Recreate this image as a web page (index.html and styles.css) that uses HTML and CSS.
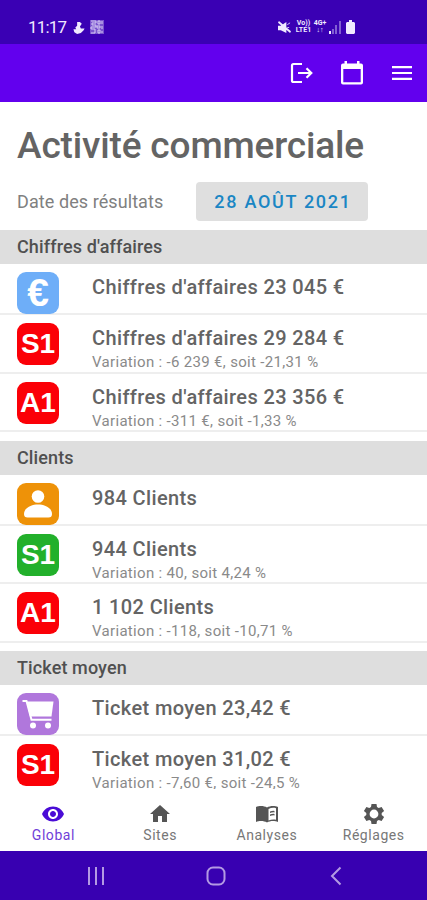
FILE: index.html
```html
<!DOCTYPE html>
<html lang="fr">
<head>
    <meta charset="UTF-8">
    <meta name="viewport" content="width=device-width, initial-scale=1.0">
    <title>Activité commerciale</title>
    <link rel="stylesheet" href="styles.css">
</head>
<body>
    <div class="phone">
        <!-- Barre de statut -->
        <div class="status-bar">
            <span class="time">11:17</span>
            <svg class="status-hand" viewBox="0 0 12 14"><path d="M4 1h3l2 2-2 3 1 2 4 0-1 2-3 3-4 1-3-2-1-3 3 0-1-2 2-2z"/></svg>
            <svg class="status-app" viewBox="0 0 14 14"><path d="M0 0h14v14H0z" opacity=".35"/><path d="M1 1h5v2H2v2h4v2H1v2h4v4H1M8 1h2v3H8zM7 6h3v2H7zM8 10h2v3H8zM12 1v3M12 6v3M12 11v2" class="thin"/></svg>
            <svg class="status-mute" viewBox="0 0 14 14"><path d="M0 5h3l6-4v12L3 10H0zM1 0l13 11-1 2L0 2z"/><path d="M10 4l3-2M10 7h2" class="thin"/></svg>
            <span class="network"><span>Vo))</span><span>LTE1</span></span>
            <span class="network"><span>4G+</span><span>↓↑</span></span>
            <svg class="status-signal" viewBox="0 0 12 13"><path d="M0 10h2v3H0z"/><path d="M3 8h2v5H3zM6 4h2v9H6zM10 0h2v13h-2z" opacity=".4"/></svg>
            <svg class="status-battery" viewBox="0 0 9 14"><path d="M3 0h3v2h2l1 1v10l-1 1H1l-1-1V3l1-1h2z"/></svg>
        </div>

        <!-- Barre d'actions -->
        <div class="app-bar">
            <svg class="icon-logout" viewBox="0 0 24 22"><path d="M13 2H4.500Q3 2 3 3.500V18.500Q3 20 4.500 20H13M9 11H22M17.500 6.200L22.300 11L17.500 15.800"/></svg>
            <svg class="icon-calendar" viewBox="0 0 22 24"><path fill-rule="evenodd" d="M3.500 0H6v2.500h10V0h2.500v2.500H20q2 0 2 2V21.500q0 2-2 2H2q-2 0-2-2V4.500q0-2 2-2h1.500zM2.300 8v13.200h17.400V8z"/></svg>
            <svg class="icon-menu" viewBox="0 0 20 14"><path d="M0 1.200h20M0 7h20M0 12.800h20"/></svg>
        </div>

        <div class="content">
            <h1>Activité commerciale</h1>
            <div class="date-row">
                <span class="date-label">Date des résultats</span>
                <button class="date-button">28 AOÛT 2021</button>
            </div>

            <!-- Chiffres d'affaires -->
            <h2>Chiffres d'affaires</h2>
            <div class="list">
                <div class="item short">
                    <div class="badge blue euro">€</div>
                    <div class="text"><h3>Chiffres d'affaires 23 045 €</h3></div>
                </div>
                <div class="item">
                    <div class="badge red">S1</div>
                    <div class="text"><h3>Chiffres d'affaires 29 284 €</h3><p>Variation : -6 239 €, soit -21,31 %</p></div>
                </div>
                <div class="item">
                    <div class="badge red">A1</div>
                    <div class="text"><h3>Chiffres d'affaires 23 356 €</h3><p>Variation : -311 €, soit -1,33 %</p></div>
                </div>
            </div>

            <!-- Clients -->
            <h2>Clients</h2>
            <div class="list">
                <div class="item short">
                    <div class="badge orange"><svg viewBox="0 0 42 42"><circle cx="21" cy="13.500" r="6.300"/><path d="M7 31C7 25 14 21.500 21 21.500S35 25 35 31Q35 34.500 31.500 34.500H10.500Q7 34.500 7 31z"/></svg></div>
                    <div class="text"><h3>984 Clients</h3></div>
                </div>
                <div class="item">
                    <div class="badge green">S1</div>
                    <div class="text"><h3>944 Clients</h3><p>Variation : 40, soit 4,24 %</p></div>
                </div>
                <div class="item">
                    <div class="badge red">A1</div>
                    <div class="text"><h3>1 102 Clients</h3><p>Variation : -118, soit -10,71 %</p></div>
                </div>
            </div>

            <!-- Ticket moyen -->
            <h2>Ticket moyen</h2>
            <div class="list">
                <div class="item short">
                    <div class="badge purple"><svg viewBox="0 0 42 42"><path d="M9.500 8.500H36.500L34.500 23.500H13z"/><path class="cart-line" d="M5.500 8H9.500L14.500 26.700H34.500"/><circle cx="16" cy="32.500" r="3"/><circle cx="31" cy="32.500" r="3"/></svg></div>
                    <div class="text"><h3>Ticket moyen 23,42 €</h3></div>
                </div>
                <div class="item">
                    <div class="badge red">S1</div>
                    <div class="text"><h3>Ticket moyen 31,02 €</h3><p>Variation : -7,60 €, soit -24,5 %</p></div>
                </div>
            </div>
        </div>

        <!-- Onglets -->
        <div class="tabs">
            <div class="tab active">
                <svg viewBox="0 0 24 24"><path d="M12 4.500C7 4.500 2.730 7.610 1 12c1.730 4.390 6 7.500 11 7.500s9.270-3.110 11-7.500c-1.730-4.390-6-7.500-11-7.500zM12 17c-2.760 0-5-2.240-5-5s2.240-5 5-5 5 2.240 5 5-2.240 5-5 5zm0-8c-1.660 0-3 1.340-3 3s1.340 3 3 3 3-1.340 3-3-1.340-3-3-3z"/></svg>
                <span>Global</span>
            </div>
            <div class="tab">
                <svg viewBox="0 0 24 24"><path d="M10 20v-6h4v6h5v-8h3L12 3 2 12h3v8z"/></svg>
                <span>Sites</span>
            </div>
            <div class="tab">
                <svg viewBox="0 0 24 24"><path fill-rule="evenodd" d="M12 5.500C9 3.500 4 3.500 1 5v15c3-1.500 8-1.500 11 .5 3-2 8-2 11-.5V5c-3-1.500-8-1.500-11 .5zM13.500 7c2.500-1.300 5-1.500 7.500-.8v11.600c-2.500-.6-5-.3-7.500.7z"/><path d="M15 9.500q2-.8 4.500-.6v1.500q-2.500-.2-4.500.6zM15 12.500q2-.8 4.500-.6v1.500q-2.500-.2-4.500.6z"/></svg>
                <span>Analyses</span>
            </div>
            <div class="tab">
                <svg viewBox="0 0 24 24"><path fill-rule="evenodd" d="M9.500 2h5l.5 3 1.700 1 2.900-1.100 2.500 4.200-2.400 1.900v2l2.400 1.900-2.500 4.200-2.900-1.100-1.700 1-.5 3h-5L9 19l-1.700-1-2.900 1.100-2.500-4.200L4.300 13v-2L1.900 9.100l2.500-4.200L7.300 6 9 5zM12 7.600a4.400 4.400 0 100 8.800 4.400 4.400 0 000-8.800z"/></svg>
                <span>Réglages</span>
            </div>
        </div>

        <!-- Navigation système -->
        <div class="system-nav">
            <svg viewBox="0 0 20 20"><path d="M3 1v18M10 1v18M17 1v18"/></svg>
            <svg viewBox="0 0 20 20"><rect x="1.500" y="1.500" width="17" height="17" rx="5.500"/></svg>
            <svg viewBox="0 0 20 20"><path d="M14.500 1.500L6 10l8.500 8.500"/></svg>
        </div>
    </div>
</body>
</html>
```
FILE: styles.css
```css
* {
    box-sizing: border-box;
}

body {
    margin: 0;
    background-color: #fff;
    font-family: Roboto, sans-serif;
    color: #646464;
}

.phone {
    width: 427px;
    height: 900px;
    display: flex;
    flex-direction: column;
    overflow: hidden;
}

/* Barre de statut */
.status-bar {
    height: 44px;
    flex: none;
    display: flex;
    align-items: center;
    padding: 10px 0 0 28px;
    background-color: #3a00b4;
    color: #f0eaff;
}

.status-bar svg {
    fill: #f0eaff;
}

.status-bar .thin {
    fill: none;
    stroke: #d8ccf5;
    stroke-width: 1;
}

.time {
    width: 45px;
    font-size: 17px;
    letter-spacing: -0.8px;
}

.status-hand {
    width: 12px;
    height: 13px;
}

.status-app {
    width: 14px;
    height: 14px;
    margin-left: 5px;
}

.status-mute {
    width: 13px;
    height: 13px;
    margin-left: 174px;
}

.network {
    display: flex;
    flex-direction: column;
    width: 17px;
    margin-left: 4px;
    font-size: 7px;
    line-height: 7px;
    font-weight: 700;
    text-align: center;
}

.network + .network {
    width: 14px;
    margin-left: 1px;
}

.status-signal {
    width: 12px;
    height: 13px;
    margin-left: 2px;
}

.status-battery {
    width: 9px;
    height: 14px;
    margin-left: 5px;
}

/* Barre d'actions */
.app-bar {
    height: 58px;
    flex: none;
    display: flex;
    align-items: center;
    justify-content: flex-end;
    padding-right: 15px;
    background-color: #6200ee;
}

.app-bar svg {
    fill: none;
    stroke: #fff;
    stroke-width: 2.2;
}

.icon-logout {
    width: 24px;
    height: 22px;
    margin-right: 28px;
}

.app-bar .icon-calendar {
    width: 22px;
    height: 24px;
    margin-right: 29px;
    fill: #fff;
    stroke: none;
}

.icon-menu {
    width: 20px;
    height: 14px;
}

/* Contenu */
.content {
    flex: 1;
    min-height: 0;
    overflow: hidden;
}

h1, h2, h3, p {
    margin: 0;
}

h1 {
    padding: 22px 17px 0;
    font-size: 37px;
    line-height: 44px;
    font-weight: 500;
    letter-spacing: -0.15px;
    white-space: nowrap;
}

.date-row {
    display: flex;
    align-items: center;
    height: 40px;
    margin: 13px 0 9px 17px;
}

.date-label {
    width: 179px;
    font-size: 18px;
    letter-spacing: 0.08px;
    color: #808080;
}

.date-button {
    width: 172px;
    height: 39px;
    padding: 0 0 0 2px;
    border: none;
    border-radius: 4px;
    background-color: #dfdfdf;
    color: #1a86c4;
    font-family: inherit;
    font-size: 18px;
    font-weight: 500;
    letter-spacing: 1.7px;
}

h2 {
    height: 34px;
    padding-left: 17px;
    background-color: #dedede;
    color: #505050;
    font-size: 18px;
    line-height: 34px;
    font-weight: 500;
    letter-spacing: 0.12px;
}

.list {
    margin-bottom: 8.500px;
}

.item {
    display: flex;
    height: 58.500px;
    padding: 8px 0 0 17px;
    border-bottom: 2px solid #eee;
}

.item.short {
    height: 51px;
}

.badge {
    width: 42px;
    height: 42px;
    flex: none;
    border-radius: 9px;
    color: #fff;
    font-family: "Liberation Sans", Arial, sans-serif;
    font-size: 28px;
    line-height: 42px;
    font-weight: 700;
    text-align: center;
}

.badge svg {
    display: block;
    fill: #fff;
}

.badge .cart-line {
    fill: none;
    stroke: #fff;
    stroke-width: 2;
}

.euro {
    font-size: 39px;
}

.blue {
    background-color: #6eaef8;
}

.red {
    background-color: #fb0007;
}

.orange {
    background-color: #ee9208;
}

.green {
    background-color: #22b02b;
}

.purple {
    background-color: #b077dc;
}

.text {
    margin-left: 33px;
    white-space: nowrap;
}

h3 {
    padding-top: 3px;
    font-size: 20px;
    line-height: 24px;
    font-weight: 500;
    letter-spacing: 0.37px;
}

p {
    font-size: 15px;
    line-height: 22px;
    padding-top: 1px;
    letter-spacing: 0.32px;
    color: #8a8a8a;
}

/* Onglets */
.tabs {
    height: 62px;
    flex: none;
    display: flex;
    background-color: #fff;
}

.tab {
    flex: 1;
    display: flex;
    flex-direction: column;
    align-items: center;
    padding-top: 13px;
    font-size: 14px;
    line-height: 18px;
    letter-spacing: 0.55px;
    color: #777;
}

.tab svg {
    width: 24px;
    height: 24px;
    fill: #555;
}

.tab.active {
    color: #7040d8;
}

.tab.active svg {
    fill: #4a0cd6;
}

/* Navigation système */
.system-nav {
    height: 49px;
    flex: none;
    display: flex;
    align-items: center;
    justify-content: center;
    gap: 100px;
    padding-left: 4px;
    background-color: #3800b1;
}

.system-nav svg {
    width: 20px;
    height: 20px;
    fill: none;
    stroke: #b39ae3;
    stroke-width: 2;
}
```
